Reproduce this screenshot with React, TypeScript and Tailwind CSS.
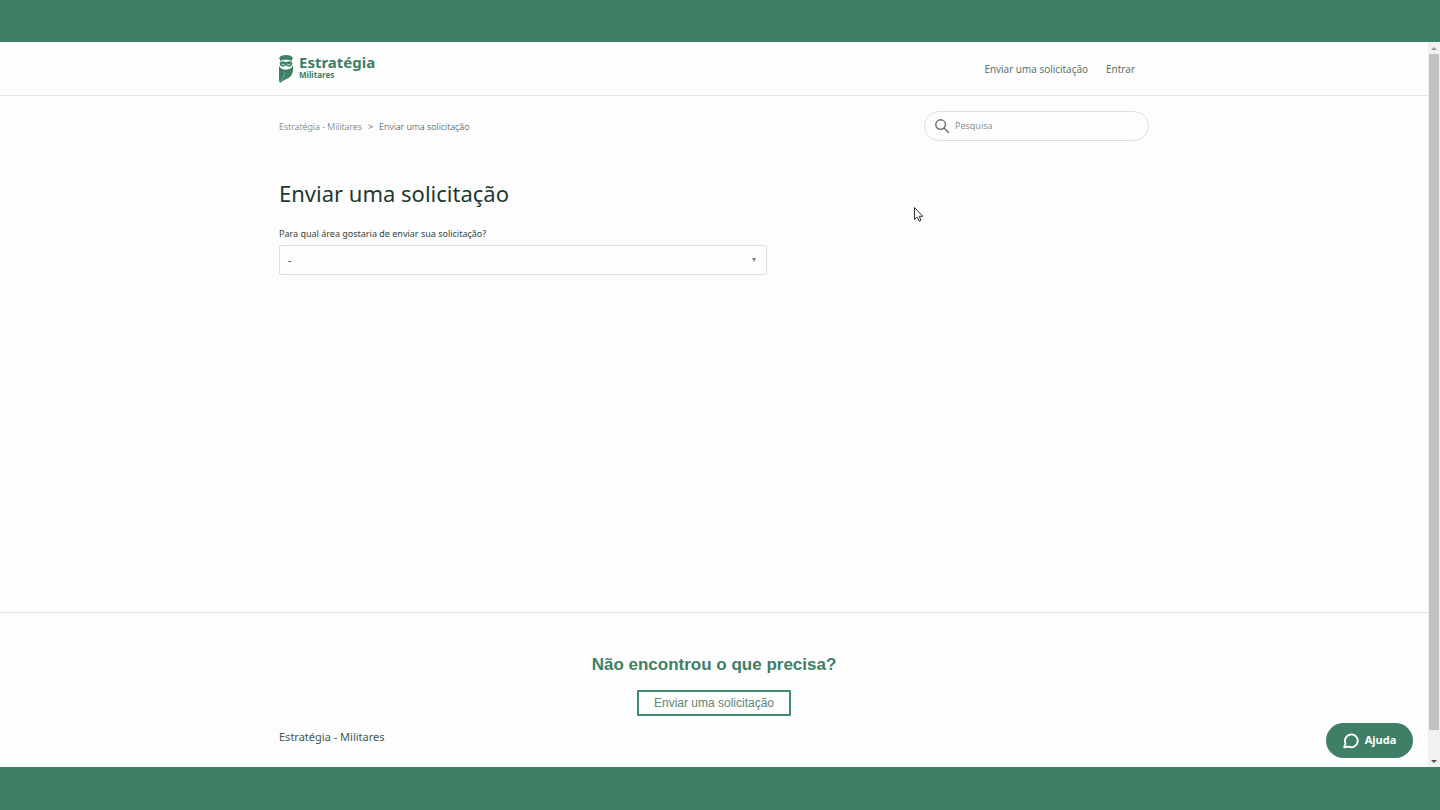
const BRAND = "Estratégia - Militares";
const REQUEST = "Enviar uma solicitação";

function OwlMark() {
  return (
    <svg viewBox="0 0 42 84" className="h-7 w-3.5" fill="#3f7f66" aria-hidden="true">
      {/* cap */}
      <path d="M0 9C5 2 12 0 21 0s16 2 21 9l-3 4v6c-5-4-11-5-18-5S8 15 3 19v-6z" />
      {/* glasses */}
      <path d="M3 22c5-4 13-4 18 0 5-4 13-4 18 0l1 4c-1 6-5 9-10 9-4 0-7-2-9-5-2 3-5 5-9 5-5 0-9-3-10-9z" />
      <path d="M8 27c2 3 7 3 9 0M25 27c2 3 7 3 9 0" fill="none" stroke="#fff" strokeWidth="2.5" />
      {/* body */}
      <path d="M0 32c4 8 11 12 21 12s17-4 21-13c1 13 0 23-6 31C29 71 14 74 3 84 1 80 0 77 0 72z" />
      <path d="M17 52c0 9-4 17-12 26" fill="none" stroke="#fff" strokeWidth="1" />
    </svg>
  );
}

function SearchIcon() {
  return (
    <svg viewBox="0 0 14 14" className="size-3.5" fill="none" stroke="#68716d" strokeWidth="1.4" aria-hidden="true">
      <circle cx="5.6" cy="5.6" r="4.8" />
      <path d="M9.1 9.1l4.4 4.4" strokeLinecap="round" />
    </svg>
  );
}

function ChatIcon() {
  return (
    <svg viewBox="0 0 16 16" className="size-4" fill="none" stroke="#fff" strokeWidth="1.9" strokeLinejoin="round" aria-hidden="true">
      <path d="M2.5 10.4A6.4 6.4 0 1 1 5.6 13.6L1.2 14.4z" />
    </svg>
  );
}

function Header() {
  return (
    <header className="border-b border-[#e3e5e4]">
      <div className="mx-auto flex h-[53px] max-w-[870px] items-center justify-between">
        <a href="#" className="flex items-center gap-1.5 text-[#3f7f66]">
          <OwlMark />
          <span className="flex flex-col pb-1 font-bold">
            <span className="text-[15px] leading-4">Estratégia</span>
            <span className="text-[8px] leading-2.5">Militares</span>
          </span>
        </a>
        <nav className="flex gap-[18px] pt-px pr-[14px] font-['Open_Sans',sans-serif] text-[10px] text-[#4f6e62]">
          <a href="#">{REQUEST}</a>
          <a href="#">Entrar</a>
        </nav>
      </div>
    </header>
  );
}

function RequestForm() {
  return (
    <main className="mx-auto w-full max-w-[870px] flex-1 pt-[15px]">
      <div className="flex items-center justify-between">
        <nav aria-label="Trilha" className="flex gap-1.5 pt-0.5 text-[9px] font-light text-[#35463f]">
          <a href="#" className="text-[#5a7268]">{BRAND}</a>
          <span>&gt;</span>
          <span>{REQUEST}</span>
        </nav>
        <label className="flex h-[30px] w-[225px] items-center gap-1.5 rounded-full border border-[#dddfde] px-2.5">
          <SearchIcon />
          <input type="search" aria-label="Pesquisa" placeholder="Pesquisa" className="min-w-0 flex-1 bg-transparent text-[9px] outline-none placeholder:text-[#8b9691]" />
        </label>
      </div>

      <h1 className="mt-9 text-[22px] leading-8 text-[#1d3a2f]">{REQUEST}</h1>

      <form className="mt-[17px] w-[488px]">
        <label htmlFor="area" className="block text-[9px] leading-4 text-[#2f463d]">
          Para qual área gostaria de enviar sua solicitação?
        </label>
        <div className="mt-[3px] grid items-center">
          <select id="area" className="col-start-1 row-start-1 h-[30px] appearance-none rounded-xs border border-[#dddfde] px-2 text-[10px] text-[#2f463d]">
            <option>-</option>
          </select>
          <svg viewBox="0 0 4 4" className="pointer-events-none col-start-1 row-start-1 mr-[11px] size-1 justify-self-end" fill="#7b827f" aria-hidden="true">
            <path d="M0 0h4L2 4z" />
          </svg>
        </div>
      </form>
    </main>
  );
}

function Footer() {
  return (
    <footer className="border-t border-[#e0e2e1] pt-10 pb-[22px]">
      <div className="flex flex-col items-center gap-[13px] font-['Liberation_Sans',sans-serif]">
        <h2 className="text-[17px] leading-6 font-bold text-[#3f7f66]">Não encontrou o que precisa?</h2>
        <button type="button" className="h-[26px] rounded-[1px] border-2 border-[#3f8c6d] px-[15px] text-[12px] leading-5 text-[#5c8877]">
          {REQUEST}
        </button>
      </div>
      <div className="mx-auto mt-[13px] max-w-[870px] text-[11px] leading-4 text-[#44594f]">
        <a href="#">{BRAND}</a>
      </div>
    </footer>
  );
}

// Barra de rolagem da janela gravada
function Scrollbar() {
  return (
    <div className="flex w-3 flex-col items-center bg-[#f1f1f1]" aria-hidden="true">
      <svg viewBox="0 0 12 12" className="size-3" fill="#9a9a9a"><path d="M3 8h6L6 5z" /></svg>
      <div className="w-2.5 flex-1 bg-[#c1c1c1]" />
      <div className="flex h-[37px] items-end">
        <svg viewBox="0 0 12 12" className="size-3" fill="#505050"><path d="M3 5h6L6 8z" /></svg>
      </div>
    </div>
  );
}

export default function App() {
  return (
    <div className="relative flex min-h-screen flex-col bg-[#3f7f66] pt-[42px] pb-[43px] font-['Noto_Sans',sans-serif]">
      <div className="flex flex-1 bg-[#fdfdfd]">
        <div className="relative flex flex-1 flex-col">
          <Header />
          <RequestForm />
          <Footer />
          <button type="button" className="absolute right-[15px] bottom-[9px] flex h-[35px] w-[87px] items-center justify-center gap-1.5 rounded-full bg-[#3f7f66] text-[11px] font-bold text-white">
            <ChatIcon />
            Ajuda
          </button>
        </div>
        <Scrollbar />
      </div>

      {/* cursor */}
      <svg viewBox="0 0 10 16" className="absolute top-[207px] left-[914px] h-4 w-2.5" fill="#fff" stroke="#2b3330" aria-hidden="true">
        <path d="M.5.5v12l2.7-2.4 1.9 4 1.9-.9-1.8-3.9h3.6z" />
      </svg>
    </div>
  );
}
